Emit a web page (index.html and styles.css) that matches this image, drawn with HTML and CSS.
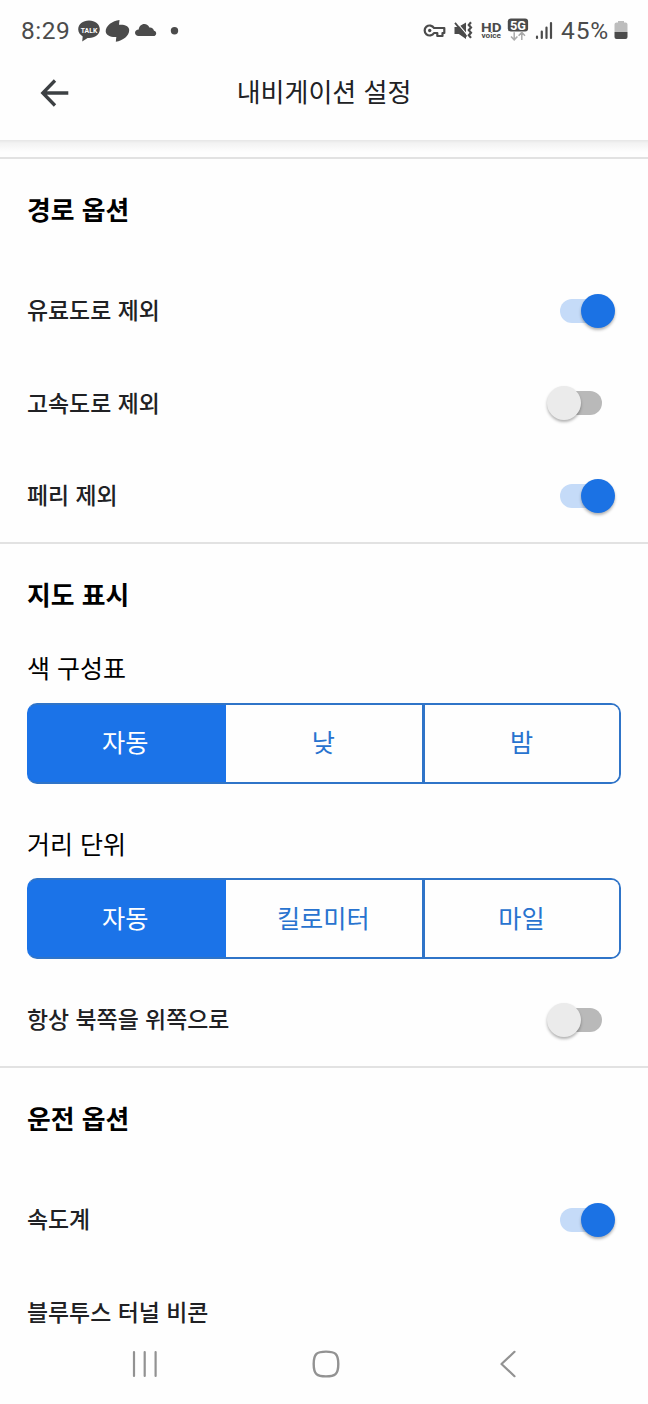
FILE: index.html
```html
<!DOCTYPE html>
<html lang="ko">
<head>
<meta charset="utf-8">
<title>내비게이션 설정</title>
<link rel="stylesheet" href="styles.css">
</head>
<body>
<div class="screen">
  <div class="status">
    <div class="status-left">
      <span class="clock">8:29</span>
      <svg class="notices" width="104" height="24" viewBox="0 0 104 24">
        <g fill="#4b4b4b">
          <path d="M11 .5C4.800.5.2 4.400.2 9.300c0 3.300 2 5.700 4.500 7.100L4.200 21.500l5.400-3.500 1.400.1c6.200 0 10.800-3.900 10.800-8.800S17.200.5 11 .5z"/>
          <path d="M41.500 0L41 4.800C46 4.200 51.200 6 51.200 10C51.200 16 45 20.600 37.800 21.800L38.300 17C33 17.400 27.700 15.500 27.700 11.300C27.700 5.500 34.500 1 41.500 0Z"/>
          <path d="M60.500 16c-2 0-3.500-1.400-3.500-3.200 0-2 1.600-3.400 3.700-3.400C61.100 6.300 63.400 4 66.300 4c2.400 0 4.100 1.300 5.100 3.600 2.400-.3 4.200 1 4.600 3.200 1.500.2 2.200 1.300 2.200 2.600 0 1.500-1.200 2.600-2.700 2.600z"/>
          <circle cx="96.500" cy="10.700" r="3.700"/>
        </g>
        <text class="talk" x="11" y="12.500" text-anchor="middle" textLength="16.500" lengthAdjust="spacingAndGlyphs">TALK</text>
      </svg>
    </div>
    <div class="status-right">
      <svg width="138" height="26" viewBox="0 0 138 26">
        <path d="M11 10A5 5 0 1 0 11 15H14.300V18H19.500V15H21.300V10z" fill="none" stroke="#4b4b4b" stroke-width="2.200" stroke-linejoin="round"/>
        <circle cx="6.700" cy="12.500" r="1.700" fill="#4b4b4b"/>
        <path d="M31.500 9h3.800L43 4.500v16.500L35.800 16h-4.300z" fill="#4b4b4b"/>
        <path d="M33.300 3.800L44.500 17.200" stroke="#fff" stroke-width="1.200"/>
        <path d="M32 4.800L43.500 18.600" stroke="#4b4b4b" stroke-width="1.800"/>
        <path d="M48 4.300l-2.200 2.600 2.200 2.600-2.200 2.600 2.200 2.600-2.200 2.600 2.200 2.600" fill="none" stroke="#4b4b4b" stroke-width="2.200"/>
        <text class="hd" x="58" y="13.500" textLength="20.500" lengthAdjust="spacingAndGlyphs">HD</text>
        <text class="voice" x="58.500" y="20.300" textLength="19.500" lengthAdjust="spacingAndGlyphs">voice</text>
        <rect x="84.800" y="0.500" width="20.300" height="13" rx="3" fill="#4b4b4b"/>
        <text class="fiveg" x="95" y="11.600" text-anchor="middle" textLength="16" lengthAdjust="spacingAndGlyphs">5G</text>
        <path d="M91.200 14.300v7.500M88 18.500l3.200 3.300 3.200-3.300M98.800 22v-7.500M95.600 17.700l3.200-3.300 3.200 3.300" fill="none" stroke="#aaa" stroke-width="1.500"/>
        <path d="M114 18.700v1.200M118.800 13.500v6.400M123.500 9.500v10.400M128 5v14.900" stroke="#4b4b4b" stroke-width="2.200" stroke-linecap="round"/>
      </svg>
      <span class="percent">45%</span>
      <svg width="14" height="20" viewBox="0 0 14 20">
        <path d="M4 1h6v1.500h1.500a2 2 0 0 1 2 2V12H.5V4.500a2 2 0 0 1 2-2H4z" fill="#bdbdbd"/>
        <path d="M.5 12h13v5a2 2 0 0 1-2 2h-9a2 2 0 0 1-2-2z" fill="#4b4b4b"/>
      </svg>
    </div>
  </div>

  <header class="header">
    <svg class="back" width="29" height="28" viewBox="0 0 29 28"><path d="M28.300 14H3.500M15 1.500L2.800 14l12.200 12.500" fill="none" stroke="#3c4043" stroke-width="3.300"/></svg>
    <h1 class="title">내비게이션 설정</h1>
  </header>

  <main class="content">
    <section class="section">
      <h2 class="heading">경로 옵션</h2>
      <div class="row"><span>유료도로 제외</span><span class="switch on"></span></div>
      <div class="row"><span>고속도로 제외</span><span class="switch"></span></div>
      <div class="row"><span>페리 제외</span><span class="switch on"></span></div>
    </section>
    <section class="section">
      <h2 class="heading">지도 표시</h2>
      <div class="field color-scheme">
        <div class="label">색 구성표</div>
        <div class="segments"><div class="segment selected">자동</div><div class="segment">낮</div><div class="segment">밤</div></div>
      </div>
      <div class="field units">
        <div class="label">거리 단위</div>
        <div class="segments"><div class="segment selected">자동</div><div class="segment">킬로미터</div><div class="segment">마일</div></div>
      </div>
      <div class="row"><span>항상 북쪽을 위쪽으로</span><span class="switch"></span></div>
    </section>
    <section class="section">
      <h2 class="heading">운전 옵션</h2>
      <div class="row"><span>속도계</span><span class="switch on"></span></div>
      <div class="row"><span>블루투스 터널 비콘</span></div>
    </section>
  </main>

  <nav class="nav">
    <svg width="26" height="28" viewBox="0 0 26 28"><path d="M2 2v24M12.700 2v24M23.600 2v24" stroke="#929292" stroke-width="2.200" stroke-linecap="round"/></svg>
    <svg class="home" width="28" height="28" viewBox="0 0 28 28"><path d="M14 1.600c9 0 12.300 2 12.300 12.400S23 26.400 14 26.400 1.700 24.400 1.700 14 5 1.600 14 1.600z" fill="none" stroke="#929292" stroke-width="2.400"/></svg>
    <svg width="18" height="28" viewBox="0 0 18 28"><path d="M15.500 1.800L2.500 14l13 12.200" fill="none" stroke="#929292" stroke-width="2.200" stroke-linecap="round" stroke-linejoin="round"/></svg>
  </nav>
</div>
</body>
</html>
```
FILE: styles.css
```css
* { box-sizing: border-box; }
body { margin: 0; background: #fefefe; font-family: "Noto Sans CJK KR", sans-serif; color: #202124; }
.screen { width: 648px; height: 1404px; display: flex; flex-direction: column; overflow: hidden; }
svg { display: block; flex: none; }

.status { flex: none; height: 60px; padding: 0 20px 0 21px; display: flex; justify-content: space-between; align-items: flex-start; font-family: Roboto, sans-serif; color: #4b4b4b; }
.status-left, .status-right { display: flex; align-items: flex-start; }
.clock, .percent { font-size: 24.500px; line-height: 28px; margin-top: 17px; font-weight: 400; }
.clock { width: 57px; letter-spacing: .5px; }
.notices { margin-top: 20px; }
.status-right svg:first-child { margin-top: 18px; }
.status-right svg:last-child { margin-top: 20px; }
.percent { width: 53px; letter-spacing: .9px; }
.talk { font: bold 8px Roboto, sans-serif; fill: #fff; }
.hd { font: bold 12.500px Roboto, sans-serif; fill: #4b4b4b; }
.voice { font: bold 7.500px Roboto, sans-serif; fill: #4b4b4b; }
.fiveg { font: bold 12.500px Roboto, sans-serif; fill: #fff; }

.header { flex: none; height: 80px; padding: 0 40px 14px; display: grid; grid-template-columns: 29px 1fr 29px; align-items: center; }
.title { margin: -4px 0 0; text-align: center; font-size: 26px; line-height: 40px; font-weight: 400; }

.content { flex: 1; min-height: 0; overflow: hidden; padding-top: 16.500px; background: linear-gradient(#e6e6e6, #f2f2f2 3px, #fefefe 12px) no-repeat 0 0 / 100% 16px; }
.section { border-top: 2px solid #e2e2e2; }
.heading { margin: 0; height: 105.500px; padding: 0 27px; line-height: 99px; font-size: 25.800px; font-weight: 700; color: #000; }
.row { height: 92.500px; padding: 0 33px 0 27px; display: flex; align-items: center; justify-content: space-between; font-size: 22.900px; font-weight: 500; line-height: 36px; }
.row > span:first-child { padding-bottom: 2px; }

.switch { width: 68px; height: 34px; margin-top: 1px; display: flex; align-items: center; position: relative; }
.switch::before { content: ""; width: 42px; height: 24px; margin-left: 13px; border-radius: 12px; background: #b9b9b9; }
.switch::after { content: ""; position: absolute; left: 0; top: 0; width: 34px; height: 34px; border-radius: 50%; background: #ebebeb; box-shadow: 0 2px 3px rgba(0, 0, 0, .3); }
.switch.on::before { background: #c5dbf8; }
.switch.on::after { left: 34px; background: #1b72e4; }

.field { padding: 0 27px; }
.color-scheme { height: 175.500px; margin-top: -4px; }
.units { height: 152.500px; }
.label { height: 57.500px; line-height: 45px; font-size: 25px; color: #000; }
.segments { height: 81px; display: grid; grid-template-columns: 196.500px 199.500px 1fr; border: 2px solid #2f74c8; border-left-color: #1b73e8; border-radius: 10px; overflow: hidden; background: linear-gradient(#1b73e8, #1b73e8) no-repeat 0 0 / 60px 100% border-box; }
.segment { display: flex; align-items: center; justify-content: center; padding-bottom: 4px; font-size: 25.200px; line-height: 40px; color: #2873cf; background: #fefefe; }
.segment:nth-child(2) { padding-right: 1px; border-right: 3px solid #2f74c8; }
.segment.selected { padding-right: 4px; background: #1b73e8; color: #fff; }
.segment:last-child { padding-right: 1px; }

.nav { flex: none; height: 72px; padding: 0 131px 8px 132px; display: flex; align-items: center; justify-content: space-between; }
.home { margin-right: 5px; }
```
